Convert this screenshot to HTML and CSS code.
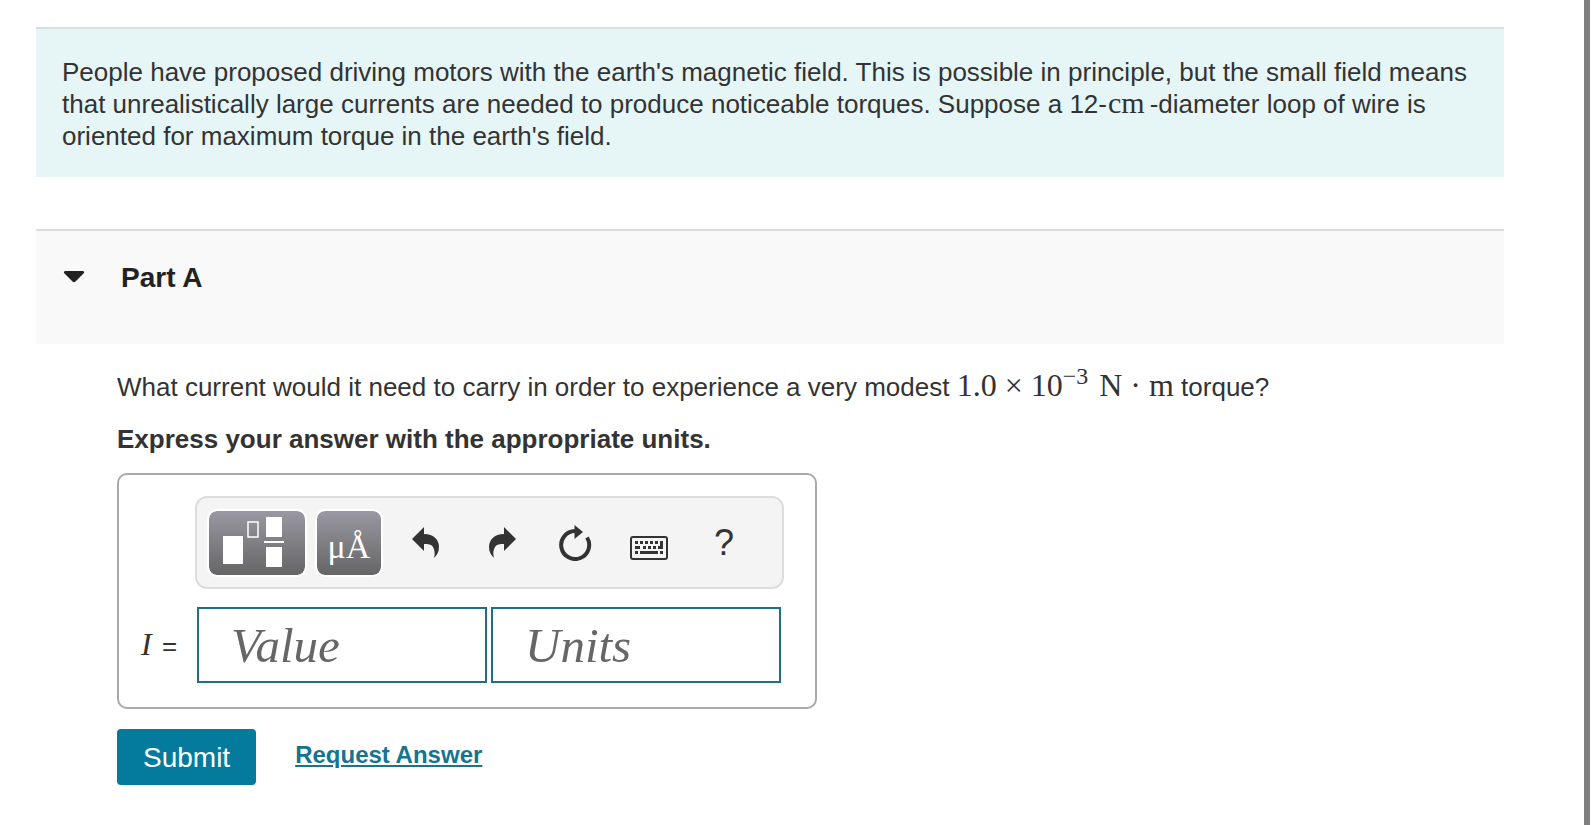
FILE: index.html
```html
<!DOCTYPE html>
<html lang="en">
<head>
    <meta charset="UTF-8">
    <meta name="viewport" content="width=device-width, initial-scale=1.0">
    <title>Part A</title>
    <link rel="stylesheet" href="styles.css">
</head>
<body>
    <main class="content">
        <section class="intro">
            <p>People have proposed driving motors with the earth's magnetic field. This is possible in principle, but the small field means that unrealistically large currents are needed to produce noticeable torques. Suppose a 12-<span class="unit">cm</span>-diameter loop of wire is oriented for maximum torque in the earth's field.</p>
        </section>

        <section class="part">
            <button type="button" class="part-header" aria-expanded="true">
                <svg class="caret" viewBox="0 0 22 12" aria-hidden="true"><path d="M2 0H20Q22 1 20.500 2.500L12.500 10.500Q11 12 9.500 10.500L1.500 2.500Q0 1 2 0Z"/></svg>
                <span>Part A</span>
            </button>

            <form class="part-body">
                <p class="question">What current would it need to carry in order to experience a very modest <span class="math">1.0<span class="op">×</span>10<sup>−3</sup><span class="newton">N</span><span class="dot">·</span>m</span> torque?</p>
                <p class="instructions">Express your answer with the appropriate units.</p>

                <div class="answer-box">
                    <div class="toolbar">
                        <button type="button" class="tool dark templates" aria-label="Templates">
                            <svg viewBox="0 0 96 64" aria-hidden="true">
                                <path fill="#fff" d="M14 25h20v28H14zM57 6h16v20H57zM57 36h16v20H57zM55 30h20v2H55z"/>
                                <rect x="39" y="11" width="10" height="15" fill="none" stroke="#fff" stroke-width="1.500"/>
                            </svg>
                        </button>
                        <button type="button" class="tool dark symbols" aria-label="Symbols">μÅ</button>
                        <button type="button" class="tool undo" aria-label="Undo">
                            <svg width="28" height="32" viewBox="0 0 28 32" aria-hidden="true"><path d="M0 12L12 0V7C22 7 27 13 27 20C27 25 25 28 22 31C23 27 23 24 21 20C19 17 16 17 12 17V24Z"/></svg>
                        </button>
                        <button type="button" class="tool" aria-label="Redo">
                            <svg width="28" height="32" viewBox="0 0 28 32" aria-hidden="true"><path d="M28 12L16 0V7C6 7 1 13 1 20C1 25 3 28 6 31C5 27 5 24 7 20C9 17 12 17 16 17V24Z"/></svg>
                        </button>
                        <button type="button" class="tool" aria-label="Reset">
                            <svg width="34" height="36" viewBox="0 0 34 36" aria-hidden="true">
                                <path d="M28 12.500A14 14 0 1 1 16 6" fill="none" stroke="#333" stroke-width="4"/>
                                <path d="M15.500 0L24 7L15.500 14Z"/>
                            </svg>
                        </button>
                        <button type="button" class="tool keyboard" aria-label="Keyboard shortcuts">
                            <svg width="38" height="24" viewBox="0 0 38 24" aria-hidden="true">
                                <rect x="1" y="1" width="36" height="22" rx="2" fill="none" stroke="#333" stroke-width="2"/>
                                <path d="M5 5h3v3H5zM10 5h3v3h-3zM15 5h3v3h-3zM20 5h3v3h-3zM25 5h3v3h-3zM30 5h3v8h-5v-3h2zM5 10h5v3H5zM13 10h3v3h-3zM18 10h3v3h-3zM23 10h3v3h-3zM5 15h3v3H5zM10 15h18v3H10zM30 15h3v3h-3z"/>
                            </svg>
                        </button>
                        <button type="button" class="tool help" aria-label="Help">?</button>
                    </div>
                    <div class="answer-row">
                        <label for="value"><i>I</i> =</label>
                        <input type="text" id="value" placeholder="Value">
                        <input type="text" id="units" placeholder="Units" aria-label="Units">
                    </div>
                </div>

                <div class="actions">
                    <button type="submit" class="submit">Submit</button>
                    <a href="#">Request Answer</a>
                </div>
            </form>
        </section>
    </main>
</body>
</html>
```
FILE: styles.css
```css
* {
    box-sizing: border-box;
}
body {
    margin: 0;
    min-height: 100vh;
    display: flex;
    font-family: "Liberation Sans", Arial, sans-serif;
    font-size: 26px;
    line-height: 32px;
    color: #333;
    background-color: #fff;
}
/* scroll track on the right edge */
body::after {
    content: "";
    width: 6px;
    margin-right: 6px;
    background-color: #808080;
}
p {
    margin: 0;
}
button {
    font-family: inherit;
    cursor: pointer;
}
.content {
    flex: 1;
    padding: 27px 80px 0 36px;
}
.intro {
    padding: 27px 24px 25px 26px;
    margin-bottom: 52px;
    border-top: 2px solid #d8dfdf;
    background-color: #e6f6f7;
}
/* no line height, so the bigger serif text keeps the lines even */
.math, .unit {
    font-family: "Liberation Serif", "Times New Roman", serif;
    line-height: 0;
}
.math {
    font-size: 32px;
}
.unit {
    margin-right: 5px;
    margin-left: 1px;
    font-size: 30px;
}
.op {
    margin: 0 8px;
}
.math sup {
    font-size: 24px;
}
.newton {
    margin-left: 11px;
}
.dot {
    margin: 0 8px;
}
.part-header {
    display: flex;
    gap: 36px;
    width: 100%;
    height: 115px;
    padding: 31px 27px;
    border: none;
    border-top: 2px solid #ddd;
    background-color: #f9f9f9;
    color: #222;
    font-size: 28px;
    font-weight: bold;
    line-height: 32px;
}
.caret {
    width: 22px;
    height: 12px;
    margin-top: 9px;
    fill: #222;
}
.part-body {
    padding: 27px 0 0 81px;
}
.question {
    margin-bottom: 20px;
}
.instructions {
    margin-bottom: 18px;
    font-weight: bold;
}
.answer-box {
    width: 700px;
    max-width: 100%;
    padding: 21px 31px 24px 20px;
    border: 2px solid #aaa;
    border-radius: 10px;
}
.toolbar {
    display: flex;
    align-items: center;
    height: 93px;
    margin: 0 0 18px 56px;
    padding: 0 10px;
    border: 2px solid #ddd;
    border-radius: 12px;
    background-color: #f4f4f4;
}
.tool {
    display: flex;
    align-items: center;
    justify-content: center;
    width: 74px;
    height: 68px;
    padding: 0;
    border: none;
    background: none;
    color: #333;
}
.tool svg {
    fill: #333;
}
.dark {
    border: 2px solid #fff;
    border-radius: 10px;
    background: linear-gradient(#9a98a3, #656565) padding-box;
    color: #fff;
}
.templates {
    width: 100px;
    margin-right: 8px;
}
.templates svg {
    width: 96px;
    height: 64px;
}
.symbols {
    width: 68px;
    margin-right: 8px;
    padding-top: 8px;
    font-family: "Liberation Serif", "Times New Roman", serif;
    font-size: 34px;
}
.undo {
    padding-right: 4px;
}
.keyboard {
    padding-top: 10px;
    padding-right: 2px;
}
.help {
    font-size: 36px;
}
.answer-row {
    display: flex;
    align-items: center;
    gap: 4px;
    margin-right: 3px;
}
.answer-row label {
    width: 54px;
}
.answer-row i {
    margin: 0 3px 0 2px;
    font-family: "Liberation Serif", "Times New Roman", serif;
    font-size: 32px;
}
.answer-row input {
    flex: 1;
    min-width: 0;
    height: 76px;
    padding: 0 32px;
    border: 2px solid #1f6f86;
    background-color: #fff;
    color: #333;
    font-family: "Liberation Serif", "Times New Roman", serif;
    font-size: 49px;
    font-style: italic;
}
.answer-row input::placeholder {
    color: #666;
    opacity: 1;
}
.actions {
    display: flex;
    align-items: center;
    gap: 39px;
    margin-top: 20px;
}
.submit {
    height: 56px;
    padding: 2px 26px 0;
    border: none;
    border-radius: 4px;
    background-color: #047a9c;
    color: #fff;
    font-size: 28px;
}
.actions a {
    padding-bottom: 4px;
    color: #17748f;
    font-size: 24px;
    font-weight: bold;
}
```
